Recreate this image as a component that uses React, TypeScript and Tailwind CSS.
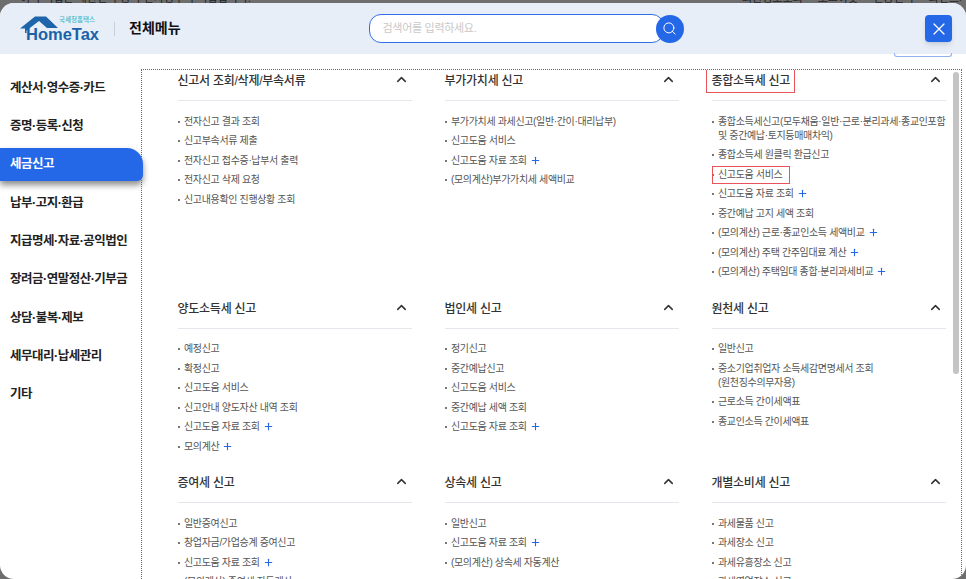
import React from 'react';
import { ChevronUp, Plus, Search, X } from 'lucide-react';

type Item = { label: string; plus?: boolean; boxed?: boolean };
type Section = { title: string; boxed?: boolean; items: Item[] };

const SIDE_MENU = [
  '계산서·영수증·카드',
  '증명·등록·신청',
  '세금신고',
  '납부·고지·환급',
  '지급명세·자료·공익법인',
  '장려금·연말정산·기부금',
  '상담·불복·제보',
  '세무대리·납세관리',
  '기타',
];

const SECTIONS: Section[] = [
  {
    title: '신고서 조회/삭제/부속서류',
    items: [
      { label: '전자신고 결과 조회' },
      { label: '신고부속서류 제출' },
      { label: '전자신고 접수증·납부서 출력' },
      { label: '전자신고 삭제 요청' },
      { label: '신고내용확인 진행상황 조회' },
    ],
  },
  {
    title: '부가가치세 신고',
    items: [
      { label: '부가가치세 과세신고(일반·간이·대리납부)' },
      { label: '신고도움 서비스' },
      { label: '신고도움 자료 조회', plus: true },
      { label: '(모의계산)부가가치세 세액비교' },
    ],
  },
  {
    title: '종합소득세 신고',
    boxed: true,
    items: [
      { label: '종합소득세신고(모두채움·일반·근로·분리과세·종교인포함\n및 중간예납·토지등매매차익)' },
      { label: '종합소득세 원클릭 환급신고' },
      { label: '신고도움 서비스', boxed: true },
      { label: '신고도움 자료 조회', plus: true },
      { label: '중간예납 고지 세액 조회' },
      { label: '(모의계산) 근로·종교인소득 세액비교', plus: true },
      { label: '(모의계산) 주택 간주임대료 계산', plus: true },
      { label: '(모의계산) 주택임대 종합·분리과세비교', plus: true },
    ],
  },
  {
    title: '양도소득세 신고',
    items: [
      { label: '예정신고' },
      { label: '확정신고' },
      { label: '신고도움 서비스' },
      { label: '신고안내 양도자산 내역 조회' },
      { label: '신고도움 자료 조회', plus: true },
      { label: '모의계산', plus: true },
    ],
  },
  {
    title: '법인세 신고',
    items: [
      { label: '정기신고' },
      { label: '중간예납신고' },
      { label: '신고도움 서비스' },
      { label: '중간예납 세액 조회' },
      { label: '신고도움 자료 조회', plus: true },
    ],
  },
  {
    title: '원천세 신고',
    items: [
      { label: '일반신고' },
      { label: '중소기업취업자 소득세감면명세서 조회\n(원천징수의무자용)' },
      { label: '근로소득 간이세액표' },
      { label: '종교인소득 간이세액표' },
    ],
  },
  {
    title: '증여세 신고',
    items: [
      { label: '일반증여신고' },
      { label: '창업자금/가업승계 증여신고' },
      { label: '신고도움 자료 조회', plus: true },
      { label: '(모의계산) 증여세 자동계산' },
    ],
  },
  {
    title: '상속세 신고',
    items: [
      { label: '일반신고' },
      { label: '신고도움 자료 조회', plus: true },
      { label: '(모의계산) 상속세 자동계산' },
    ],
  },
  {
    title: '개별소비세 신고',
    items: [
      { label: '과세물품 신고' },
      { label: '과세장소 신고' },
      { label: '과세유흥장소 신고' },
      { label: '과세영업장소 신고' },
    ],
  },
];

const HomeTaxLogo = () => (
  <div className="relative w-[80px] h-[30px] shrink-0">
    <svg className="absolute left-0 top-0" width="42" height="20" viewBox="0 0 42 20">
      <path d="M0 14.5 L15 2.5 H26 L38 14 H27 L19 7 L6.5 16.5 V19 H5 V14.5 Z" fill="#1d64aa" />
    </svg>
    <span className="absolute left-[39px] top-[1.5px] text-[6.5px] leading-[9px] text-[#45b5c4] font-medium whitespace-nowrap">국세청홈택스</span>
    <span className="absolute left-[6px] top-[11px] text-[16.5px] leading-[19px] font-bold text-[#1a62a8] whitespace-nowrap">HomeTax</span>
  </div>
);

const MenuSection = ({ section }: { section: Section }) => (
  <section>
    <div className="flex items-start justify-between h-[30px] border-b border-[#e6e7ec]">
      <h3 className="relative text-[12px] leading-[20px] font-medium text-[#333] tracking-[-0.25px]">
        {section.title}
        {section.boxed && <span className="absolute -left-[6px] -right-[5px] -top-[2px] -bottom-[2px] border border-[#e8545a]" />}
      </h3>
      <ChevronUp size={15} strokeWidth={2.4} className="text-[#333] mr-[3px] mt-[1px]" />
    </div>
    <ul className="pt-[13.5px]">
      {section.items.map(item => (
        <li key={item.label} className="relative pl-[6.5px] pb-[5.5px] text-[10px] leading-[14px] text-[#555] tracking-[-0.35px] whitespace-pre">
          <span className="absolute left-0 top-[6px] w-[2px] h-[2px] bg-[#777]" />
          <span className={item.boxed ? 'relative inline-block' : undefined}>
            {item.label}
            {item.boxed && <span className="absolute -left-[6px] -right-[8px] -top-[2px] -bottom-[2px] border border-[#e8545a]" />}
          </span>
          {item.plus && <Plus size={11} strokeWidth={2.4} className="inline ml-[3px] -mt-[1px] text-[#2468e8]" />}
        </li>
      ))}
    </ul>
  </section>
);

export default function App() {
  return (
    <div
      className="relative h-[579px] w-[966px] overflow-hidden bg-[#6e6e6e] pt-[3px]"
      style={{ fontFamily: '"Liberation Sans", "Noto Sans CJK KR", sans-serif' }}
    >
      {/* Page behind the modal, only its bottom edge peeks out */}
      <div className="absolute left-[20px] -top-[9px] text-[11px] leading-[15px] text-[#222] whitespace-nowrap">이 누리집은 대한민국 공식 전자정부 누리집입니다.</div>
      <div className="absolute left-[742px] -top-[9px] flex gap-[15px] text-[11px] leading-[15px] text-[#222] whitespace-nowrap">
        <span>회원정보조회</span>
        <span>로그아웃</span>
        <span>인증센터</span>
        <span>화면크기 80%</span>
      </div>

      <div className="relative flex flex-col h-[576px] rounded-[14px] bg-white overflow-hidden">
        {/* Header */}
        <header className="flex items-center h-[51px] shrink-0 bg-[#e7eef8] pl-[20px] pr-[14px]">
          <HomeTaxLogo />
          <div className="w-px h-[14px] bg-[#c9cfd8] ml-[14px]" />
          <h1 className="ml-[14px] text-[14px] font-bold text-[#111]">전체메뉴</h1>
          <div className="flex items-center ml-[188px]">
            <div className="flex items-center w-[295px] h-[29px] rounded-[12px] border-[1.5px] border-[#2f6fe8] bg-white pl-[13px] text-[11px] text-[#c8c8c8] tracking-[-0.3px]">
              검색어를 입력하세요.
            </div>
            <button className="flex items-center justify-center w-[28px] h-[28px] -ml-[8px] rounded-full bg-[#2468e8] text-white">
              <Search size={15} strokeWidth={1.6} />
            </button>
          </div>
          <button className="ml-auto flex items-center justify-center w-[27px] h-[27px] rounded-[4px] bg-[#2468e8] text-white shadow-md">
            <X size={20} strokeWidth={1.5} />
          </button>
        </header>

        <div className="relative flex flex-1 min-h-0">
          {/* Clipped button from scrolled content */}
          <div className="absolute left-[894px] -top-[1px] w-[58px] h-[4px] rounded-b-[3px] border border-t-0 border-[#8fb1ee]" />

          {/* Side menu */}
          <nav className="w-[143px] shrink-0 pt-[15px]">
            {SIDE_MENU.map(name => (
              <div
                key={name}
                className={
                  name === '세금신고'
                    ? 'flex items-center h-[33px] my-[2.65px] pl-[10px] text-[12.5px] tracking-[-0.5px] font-bold text-white bg-[#2468e8] rounded-tr-[16px] rounded-br-[6px] shadow-[0_4px_6px_rgba(0,0,0,0.45)]'
                    : 'flex items-center h-[38.3px] pl-[10px] text-[12.5px] tracking-[-0.5px] font-bold text-[#222] whitespace-nowrap'
                }
              >
                {name}
              </div>
            ))}
          </nav>

          {/* Menu panel */}
          <div className="relative flex-1 min-w-0 mt-[15px] mr-[4px] -ml-[2px] border-[1.5px] border-dotted border-[#2f6fe8] border-b-0 overflow-hidden">
            <div className="grid grid-cols-[234px_234px_234px] gap-x-[33px] gap-y-[14px] pl-[35.5px] pt-[1px]">
              {SECTIONS.map(s => (
                <MenuSection key={s.title} section={s} />
              ))}
            </div>
            <div className="absolute right-[2px] top-[2px] w-[6px] h-[302px] rounded-full bg-[#c4c4c4]" />
          </div>
        </div>
      </div>
    </div>
  );
}
